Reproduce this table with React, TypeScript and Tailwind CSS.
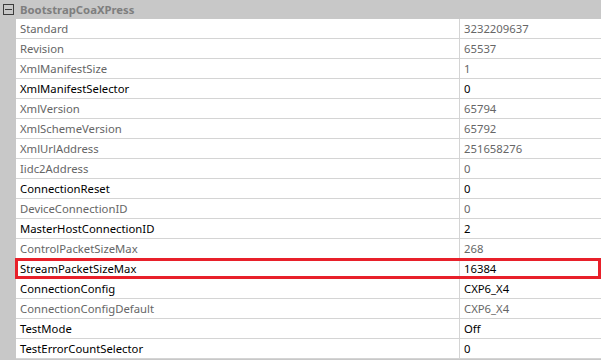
const ROWS: { name: string; value: string; editable: boolean }[] = [
  { name: 'Standard', value: '3232209637', editable: false },
  { name: 'Revision', value: '65537', editable: false },
  { name: 'XmlManifestSize', value: '1', editable: false },
  { name: 'XmlManifestSelector', value: '0', editable: true },
  { name: 'XmlVersion', value: '65794', editable: false },
  { name: 'XmlSchemeVersion', value: '65792', editable: false },
  { name: 'XmlUrlAddress', value: '251658276', editable: false },
  { name: 'Iidc2Address', value: '0', editable: false },
  { name: 'ConnectionReset', value: '0', editable: true },
  { name: 'DeviceConnectionID', value: '0', editable: false },
  { name: 'MasterHostConnectionID', value: '2', editable: true },
  { name: 'ControlPacketSizeMax', value: '268', editable: false },
  { name: 'StreamPacketSizeMax', value: '16384', editable: true },
  { name: 'ConnectionConfig', value: 'CXP6_X4', editable: true },
  { name: 'ConnectionConfigDefault', value: 'CXP6_X4', editable: false },
  { name: 'TestMode', value: 'Off', editable: true },
  { name: 'TestErrorCountSelector', value: '0', editable: true },
];

const SELECTED = 'StreamPacketSizeMax';

export default function App() {
  return (
    <div
      className="w-[601px] h-[360px] overflow-hidden bg-[#c8c8c8] text-[11.3px] leading-none"
      style={{ fontFamily: '"Noto Sans", "DejaVu Sans", sans-serif' }}
    >
      {/* Category header */}
      <div className="flex items-center h-[19px]">
        <div className="w-[16px] flex justify-center">
          <div className="w-[11px] h-[11px] border border-[#3c3c3c] flex items-center justify-center">
            <div className="w-[7px] h-[1px] bg-[#3c3c3c]" />
          </div>
        </div>
        <span className="pl-[4px] font-bold text-[#7e7e7e]">BootstrapCoaXPress</span>
      </div>

      {/* Properties */}
      <div className="pl-[16px]">
        {ROWS.map((row) => {
          const selected = row.name === SELECTED;
          const color = row.editable ? 'text-black' : 'text-[#666666]';
          return (
            <div key={row.name} className="relative flex h-[20px] bg-white border-b border-[#d4d4d4]">
              <div className={`flex items-center w-[444px] pl-[4px] border-r border-[#d4d4d4] ${color}`}>
                {row.name}
              </div>
              <div className={`flex items-center flex-1 pl-[4px] ${color}`}>{row.value}</div>
              {selected && (
                <div className="absolute -left-[1px] -top-[1px] right-0 -bottom-[1px] border-[3px] border-[#e8202a] pointer-events-none" />
              )}
            </div>
          );
        })}
      </div>
    </div>
  );
}
